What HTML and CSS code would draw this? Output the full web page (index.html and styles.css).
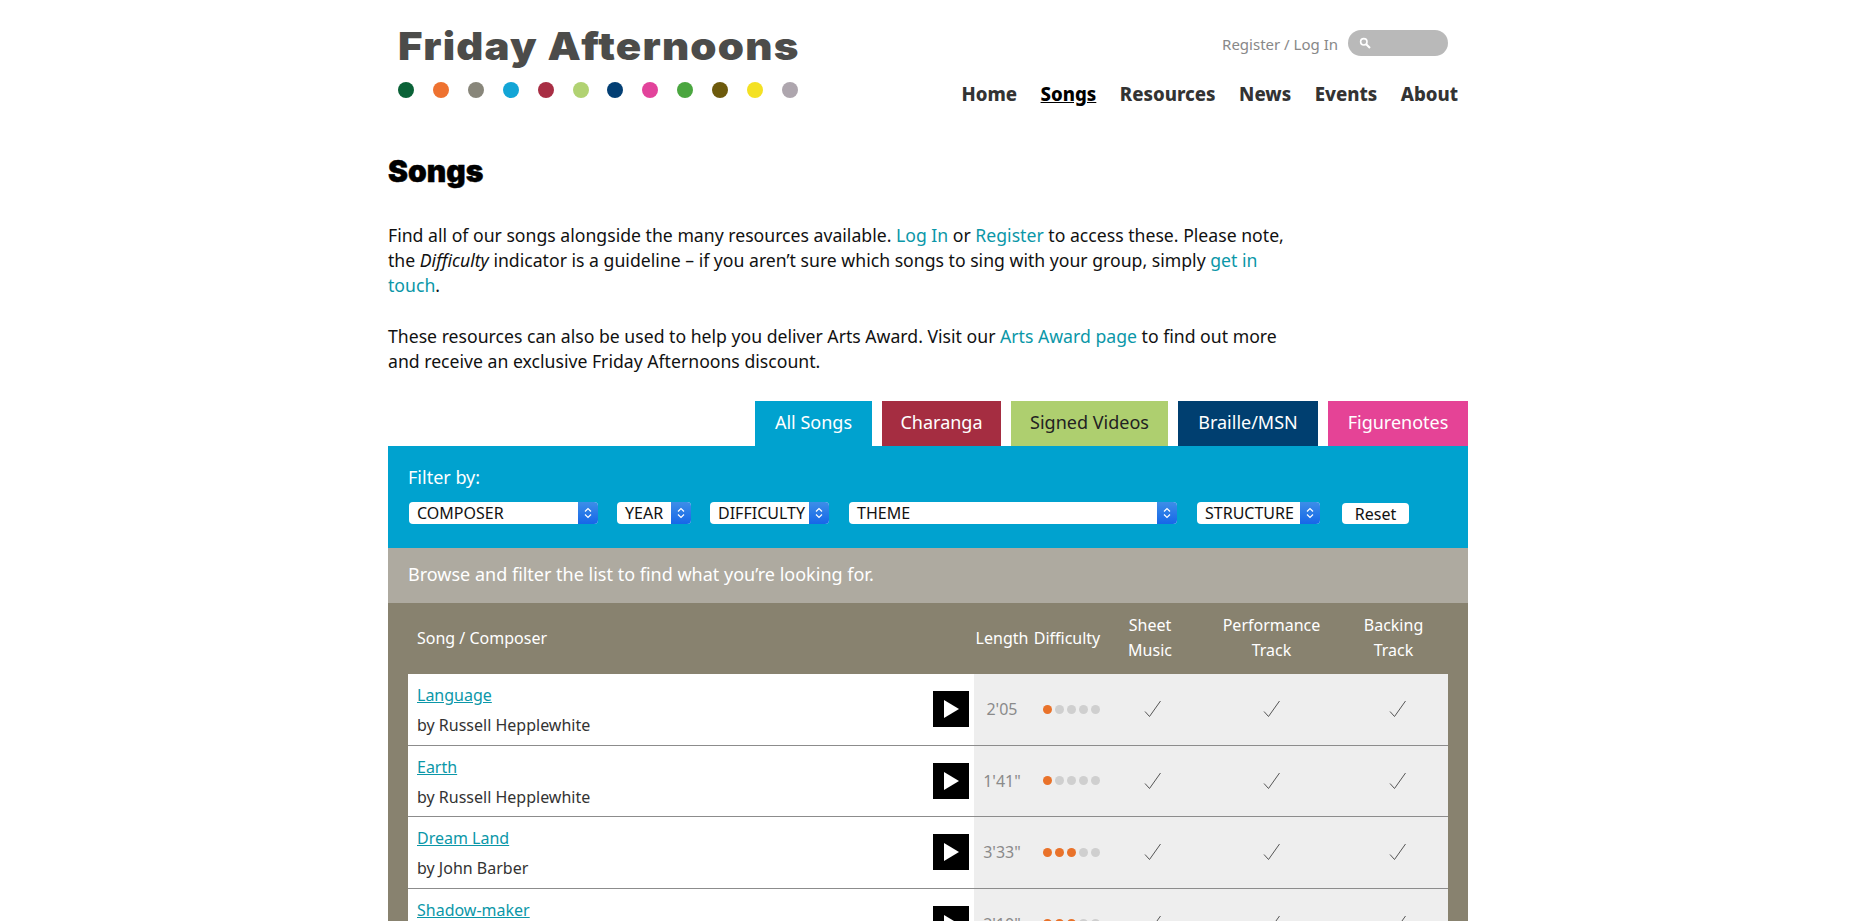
FILE: index.html
```html
<!DOCTYPE html>
<html lang="en">

<head>
    <meta charset="UTF-8">
    <title>Songs - Friday Afternoons</title>
    <link rel="stylesheet" href="styles.css">
</head>

<body>
    <div class="page">
        <header class="site-header">
            <div class="logo">
                <div class="logo-text">Friday Afternoons</div>
                <div class="logo-dots">
                    <span class="dot dot-1"></span>
                    <span class="dot dot-2"></span>
                    <span class="dot dot-3"></span>
                    <span class="dot dot-4"></span>
                    <span class="dot dot-5"></span>
                    <span class="dot dot-6"></span>
                    <span class="dot dot-7"></span>
                    <span class="dot dot-8"></span>
                    <span class="dot dot-9"></span>
                    <span class="dot dot-10"></span>
                    <span class="dot dot-11"></span>
                    <span class="dot dot-12"></span>
                </div>
            </div>
            <div class="header-right">
                <div class="account">
                    <a href="#">Register / Log In</a>
                    <div class="search">
                        <svg width="12" height="12" viewBox="0 0 12 12">
                            <circle cx="4.8" cy="4.8" r="3.2" fill="none" stroke="#fff" stroke-width="1.6" />
                            <path d="M7.2 7.2L11 11" stroke="#fff" stroke-width="2" />
                        </svg>
                    </div>
                </div>
                <nav class="main-nav">
                    <a href="#">Home</a>
                    <a href="#" class="current">Songs</a>
                    <a href="#">Resources</a>
                    <a href="#">News</a>
                    <a href="#">Events</a>
                    <a href="#">About</a>
                </nav>
            </div>
        </header>

        <h1>Songs</h1>

        <p class="intro">Find all of our songs alongside the many resources available. <a href="#">Log In</a> or <a href="#">Register</a> to access these. Please note, the <em>Difficulty</em> indicator is a guideline – if you aren’t sure which songs to sing with your group, simply <a href="#">get in touch</a>.</p>
        <p class="intro">These resources can also be used to help you deliver Arts Award. Visit our <a href="#">Arts Award page</a> to find out more and receive an exclusive Friday Afternoons discount.</p>

        <div class="tabs">
            <a href="#" class="tab tab-all">All Songs</a>
            <a href="#" class="tab tab-charanga">Charanga</a>
            <a href="#" class="tab tab-signed">Signed Videos</a>
            <a href="#" class="tab tab-braille">Braille/MSN</a>
            <a href="#" class="tab tab-figure">Figurenotes</a>
        </div>

        <section class="filters">
            <div class="filter-label">Filter by:</div>
            <div class="filter-row">
                <div class="select sel-composer"><span>COMPOSER</span><i class="stepper"><svg width="10" height="14" viewBox="0 0 10 14"><path d="M2 5.5L5 2.5L8 5.5M2 8.5L5 11.5L8 8.5" fill="none" stroke="#fff" stroke-width="1.2" /></svg></i></div>
                <div class="select sel-year"><span>YEAR</span><i class="stepper"><svg width="10" height="14" viewBox="0 0 10 14"><path d="M2 5.5L5 2.5L8 5.5M2 8.5L5 11.5L8 8.5" fill="none" stroke="#fff" stroke-width="1.2" /></svg></i></div>
                <div class="select sel-difficulty"><span>DIFFICULTY</span><i class="stepper"><svg width="10" height="14" viewBox="0 0 10 14"><path d="M2 5.5L5 2.5L8 5.5M2 8.5L5 11.5L8 8.5" fill="none" stroke="#fff" stroke-width="1.2" /></svg></i></div>
                <div class="select sel-theme"><span>THEME</span><i class="stepper"><svg width="10" height="14" viewBox="0 0 10 14"><path d="M2 5.5L5 2.5L8 5.5M2 8.5L5 11.5L8 8.5" fill="none" stroke="#fff" stroke-width="1.2" /></svg></i></div>
                <div class="select sel-structure"><span>STRUCTURE</span><i class="stepper"><svg width="10" height="14" viewBox="0 0 10 14"><path d="M2 5.5L5 2.5L8 5.5M2 8.5L5 11.5L8 8.5" fill="none" stroke="#fff" stroke-width="1.2" /></svg></i></div>
                <button class="reset" type="button">Reset</button>
            </div>
        </section>

        <div class="browse">Browse and filter the list to find what you’re looking for.</div>

        <section class="song-list">
            <table class="songs">
                <colgroup>
                    <col class="col-song">
                    <col class="col-length">
                    <col class="col-diff">
                    <col class="col-sheet">
                    <col class="col-perf">
                    <col class="col-back">
                </colgroup>
                <thead>
                    <tr>
                        <th class="th-song">Song / Composer</th>
                        <th>Length</th>
                        <th>Difficulty</th>
                        <th>Sheet<br>Music</th>
                        <th>Performance<br>Track</th>
                        <th class="th-back">Backing<br>Track</th>
                    </tr>
                </thead>
                <tbody>
                    <tr>
                        <td class="song">
                            <div class="song-cell">
                                <div class="song-text"><a href="#">Language</a><div class="by">by Russell Hepplewhite</div></div>
                                <span class="play"></span>
                            </div>
                        </td>
                        <td class="length">2'05</td>
                        <td class="diff"><div class="level"><b></b><i></i><i></i><i></i><i></i></div></td>
                        <td class="tick tick-sheet"><svg width="18" height="18" viewBox="0 0 18 18"><path d="M1 11.5L5.5 16.5L16.500 1" /></svg></td>
                        <td class="tick"><svg width="18" height="18" viewBox="0 0 18 18"><path d="M1 11.5L5.5 16.5L16.500 1" /></svg></td>
                        <td class="tick"><svg width="18" height="18" viewBox="0 0 18 18"><path d="M1 11.5L5.5 16.5L16.500 1" /></svg></td>
                    </tr>
                    <tr>
                        <td class="song">
                            <div class="song-cell">
                                <div class="song-text"><a href="#">Earth</a><div class="by">by Russell Hepplewhite</div></div>
                                <span class="play"></span>
                            </div>
                        </td>
                        <td class="length">1'41"</td>
                        <td class="diff"><div class="level"><b></b><i></i><i></i><i></i><i></i></div></td>
                        <td class="tick tick-sheet"><svg width="18" height="18" viewBox="0 0 18 18"><path d="M1 11.5L5.5 16.5L16.500 1" /></svg></td>
                        <td class="tick"><svg width="18" height="18" viewBox="0 0 18 18"><path d="M1 11.5L5.5 16.5L16.500 1" /></svg></td>
                        <td class="tick"><svg width="18" height="18" viewBox="0 0 18 18"><path d="M1 11.5L5.5 16.5L16.500 1" /></svg></td>
                    </tr>
                    <tr>
                        <td class="song">
                            <div class="song-cell">
                                <div class="song-text"><a href="#">Dream Land</a><div class="by">by John Barber</div></div>
                                <span class="play"></span>
                            </div>
                        </td>
                        <td class="length">3'33"</td>
                        <td class="diff"><div class="level"><b></b><b></b><b></b><i></i><i></i></div></td>
                        <td class="tick tick-sheet"><svg width="18" height="18" viewBox="0 0 18 18"><path d="M1 11.5L5.5 16.5L16.500 1" /></svg></td>
                        <td class="tick"><svg width="18" height="18" viewBox="0 0 18 18"><path d="M1 11.5L5.5 16.5L16.500 1" /></svg></td>
                        <td class="tick"><svg width="18" height="18" viewBox="0 0 18 18"><path d="M1 11.5L5.5 16.5L16.500 1" /></svg></td>
                    </tr>
                    <tr>
                        <td class="song">
                            <div class="song-cell">
                                <div class="song-text"><a href="#">Shadow-maker</a><div class="by">&nbsp;</div></div>
                                <span class="play"></span>
                            </div>
                        </td>
                        <td class="length">2'10"</td>
                        <td class="diff"><div class="level"><b></b><b></b><b></b><i></i><i></i></div></td>
                        <td class="tick tick-sheet"><svg width="18" height="18" viewBox="0 0 18 18"><path d="M1 11.5L5.5 16.5L16.500 1" /></svg></td>
                        <td class="tick"><svg width="18" height="18" viewBox="0 0 18 18"><path d="M1 11.5L5.5 16.5L16.500 1" /></svg></td>
                        <td class="tick"><svg width="18" height="18" viewBox="0 0 18 18"><path d="M1 11.5L5.5 16.5L16.500 1" /></svg></td>
                    </tr>
                </tbody>
            </table>
        </section>
    </div>
</body>

</html>
```
FILE: styles.css
```css
html,
body {
    height: 921px;
    overflow: hidden;
}

body {
    margin: 0;
    font-family: "Noto Sans", Arial, sans-serif;
    font-size: 17px;
    color: #111;
    background-color: #fff;
}

a {
    color: #0b97a8;
    text-decoration: none;
}

.page {
    width: 1080px;
    margin: 0 0 0 388px;
}

/* header */
.site-header {
    display: flex;
    justify-content: space-between;
    height: 130px;
}

.logo {
    padding: 23px 0 0 10px;
}

.logo-text {
    width: 400px;
    font-family: Inter, sans-serif;
    font-weight: 900;
    font-size: 38.5px;
    line-height: 47px;
    letter-spacing: 1.1px;
    white-space: nowrap;
    color: #4c4c4a;
    transform: scaleX(1.09);
    transform-origin: left;
}

.logo-dots {
    display: flex;
    justify-content: space-between;
    margin-top: 12px;
}

.dot {
    width: 16px;
    height: 16px;
    border-radius: 50%;
}

.dot-1 { background-color: #0a6237; }
.dot-2 { background-color: #ee7230; }
.dot-3 { background-color: #88867a; }
.dot-4 { background-color: #13a5d6; }
.dot-5 { background-color: #a82e44; }
.dot-6 { background-color: #b1d272; }
.dot-7 { background-color: #033f74; }
.dot-8 { background-color: #e2439b; }
.dot-9 { background-color: #4aa63f; }
.dot-10 { background-color: #6d5a0c; }
.dot-11 { background-color: #f4e123; }
.dot-12 { background-color: #aea6ae; }

.header-right {
    display: flex;
    flex-direction: column;
    align-items: flex-end;
    padding: 30px 10px 0 0;
}

.account {
    display: flex;
    align-items: center;
    gap: 10px;
    margin-right: 10px;
    font-size: 15px;
}

.account a {
    color: #888;
    padding-top: 2px;
}

.search {
    display: flex;
    align-items: center;
    box-sizing: border-box;
    width: 100px;
    height: 26px;
    padding-left: 11px;
    border-radius: 13px;
    background-color: #b9b9b9;
}

.main-nav {
    display: flex;
    gap: 23.5px;
    margin-top: 24px;
}

.main-nav a {
    font-weight: 800;
    font-size: 18.6px;
    line-height: 27px;
    color: #333;
}

.main-nav a.current {
    color: #000;
    text-decoration: underline;
}

h1 {
    margin: 24px 0 0;
    font-family: Inter, sans-serif;
    font-weight: 900;
    font-size: 30px;
    line-height: 35px;
    color: #000;
    -webkit-text-stroke: 0.5px #000;
}

.intro {
    width: 900px;
    margin: 0 0 26px;
    font-size: 17.65px;
    line-height: 25px;
}

h1 + .intro {
    margin-top: 34px;
}

/* tabs */
.tabs {
    display: flex;
    justify-content: flex-end;
    gap: 10px;
    height: 45px;
    margin-top: 27px;
}

.tab {
    display: flex;
    align-items: center;
    justify-content: center;
    box-sizing: border-box;
    padding-bottom: 3px;
    color: #fff;
    font-size: 18px;
}

.tab-all { width: 117px; background-color: #00a2cf; }
.tab-charanga { width: 119px; background-color: #a52d41; }
.tab-signed { width: 157px; background-color: #aecf6f; color: #222; }
.tab-braille { width: 140px; background-color: #003f70; }
.tab-figure { width: 140px; background-color: #e54396; }

/* filters */
.filters {
    box-sizing: border-box;
    height: 102px;
    padding: 19px 20px 0;
    background-color: #00a2cf;
    color: #fff;
}

.filter-label {
    font-size: 18px;
    line-height: 24px;
}

.filter-row {
    display: flex;
    align-items: center;
    margin-top: 13px;
    padding-left: 1px;
}

.select {
    display: flex;
    justify-content: space-between;
    box-sizing: border-box;
    height: 22px;
    padding-left: 8px;
    border-radius: 4px;
    background-color: #fff;
    color: #111;
    font-size: 16px;
    line-height: 22px;
    overflow: hidden;
}

.stepper {
    display: flex;
    align-items: center;
    justify-content: center;
    width: 20px;
    background: linear-gradient(#3d8ee8, #1667e8);
}

.sel-composer { width: 189px; margin-right: 19px; }
.sel-year { width: 74px; margin-right: 19px; }
.sel-difficulty { width: 119px; margin-right: 20px; }
.sel-theme { width: 328px; margin-right: 20px; }
.sel-structure { width: 123px; margin-right: 22px; }

.reset {
    width: 67px;
    height: 21px;
    padding: 0;
    border: none;
    border-radius: 4px;
    background-color: #fff;
    color: #111;
    font-family: inherit;
    font-size: 16px;
}

.browse {
    box-sizing: border-box;
    height: 55px;
    padding-left: 20px;
    background-color: #aeaaa0;
    color: #fff;
    font-size: 18px;
    line-height: 52px;
}

/* song table */
.song-list {
    padding: 0 20px;
    background-color: #88826f;
}

.songs {
    width: 1040px;
    table-layout: fixed;
    border-collapse: collapse;
}

.col-song { width: 566px; }
.col-length { width: 56px; }
.col-diff { width: 74px; }
.col-sheet { width: 92px; }
.col-perf { width: 151px; }
.col-back { width: 101px; }

.songs th {
    height: 70px;
    padding: 0 0 1px;
    font-weight: 400;
    font-size: 16px;
    line-height: 25px;
    color: #fff;
    white-space: nowrap;
}

.songs th.th-song {
    padding-left: 9px;
    text-align: left;
}

.songs th.th-back {
    padding-right: 8px;
}

.songs td {
    height: 70.5px;
    padding: 0;
    border-bottom: 1px solid #8c8c8c;
    background-color: #eee;
    text-align: center;
}

.songs td.song {
    padding: 0 5px 0 9px;
    background-color: #fff;
    text-align: left;
    font-size: 16px;
    line-height: 30px;
    color: #333;
}

.song-cell {
    display: flex;
    align-items: center;
    justify-content: space-between;
}

.song-text {
    margin-top: 2px;
}

.song a {
    text-decoration: underline;
}

.play {
    width: 36px;
    height: 36px;
    background-color: #000;
    position: relative;
}

.play::after {
    content: "";
    position: absolute;
    left: 11px;
    top: 9px;
    border-left: 15px solid #fff;
    border-top: 9px solid transparent;
    border-bottom: 9px solid transparent;
}

.length {
    font-size: 16px;
    color: #8a8a8a;
}

.songs td.diff {
    padding-left: 9px;
}

.level {
    display: flex;
    justify-content: center;
    gap: 3px;
}

.level b,
.level i {
    width: 9px;
    height: 9px;
    border-radius: 50%;
}

.level b {
    background-color: #e9722a;
}

.level i {
    background-color: #cfcfcf;
}

.songs td.tick-sheet {
    padding-left: 5px;
}

.tick svg {
    display: block;
    margin: 0 auto;
}

.tick path {
    fill: none;
    stroke: #555;
    stroke-width: 1;
}
```
